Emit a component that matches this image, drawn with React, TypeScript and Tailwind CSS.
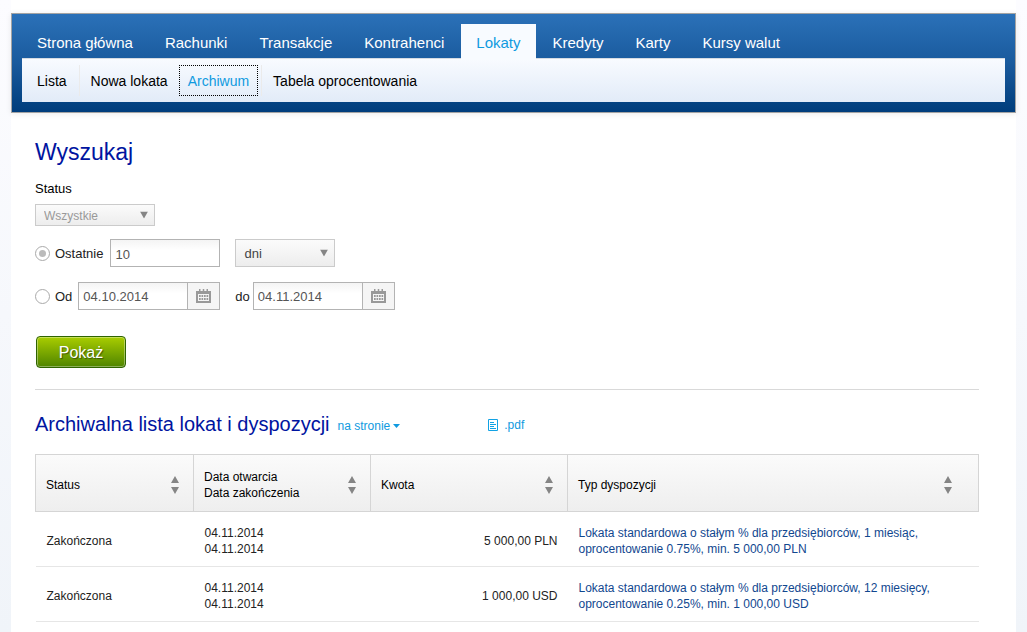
import { useState } from "react";
import type { ReactNode } from "react";
import clsx from "clsx";

const mainTabs = [
  "Strona główna",
  "Rachunki",
  "Transakcje",
  "Kontrahenci",
  "Lokaty",
  "Kredyty",
  "Karty",
  "Kursy walut",
];

const subTabs = [
  { label: "Lista", divider: true },
  { label: "Nowa lokata", divider: false },
  { label: "Archiwum", divider: true },
  { label: "Tabela oprocentowania", divider: false },
];

const deposits = [
  {
    status: "Zakończona",
    opened: "04.11.2014",
    closed: "04.11.2014",
    amount: "5 000,00 PLN",
    type: "Lokata standardowa o stałym % dla przedsiębiorców, 1 miesiąc, oprocentowanie 0.75%, min. 5 000,00 PLN",
  },
  {
    status: "Zakończona",
    opened: "04.11.2014",
    closed: "04.11.2014",
    amount: "1 000,00 USD",
    type: "Lokata standardowa o stałym % dla przedsiębiorców, 12 miesięcy, oprocentowanie 0.25%, min. 1 000,00 USD",
  },
];

const Header = () => {
  return (
    <header className="border border-[#a3a3a3] bg-linear-to-b from-[#2b71b8] via-[#195a9d] via-50% to-[#003d7c] px-2.5 pb-2.5 pt-2.5 shadow-[0_1px_6px_rgba(0,0,0,0.08)]">
      <nav aria-label="Menu główne">
        <ul className="flex gap-0.5">
          {mainTabs.map((tab) => (
            <li key={tab}>
              <a
                href="#"
                className={clsx(
                  "block px-[15px] text-[15px] leading-[37px] whitespace-nowrap",
                  tab === "Lokaty"
                    ? "relative -mb-px h-[35px] bg-[#f8fbff] text-[#0f9ae0]"
                    : "h-[34px] text-white",
                )}
              >
                {tab}
              </a>
            </li>
          ))}
        </ul>
      </nav>
      <nav
        aria-label="Lokaty"
        className="border-t border-[#d5dbe2] bg-linear-to-b from-[#f8fbff] to-[#e2ebf8] px-1.5 py-1.5"
      >
        <ul className="flex gap-0.5">
          {subTabs.map(({ label, divider }) => (
            <li
              key={label}
              className={clsx(divider && "border-r border-[#ebebeb] pr-[3px]")}
            >
              <a
                href="#"
                className={clsx(
                  "block border border-dotted px-2 pt-0.5 text-sm leading-[27px] whitespace-nowrap",
                  label === "Archiwum"
                    ? "border-black text-[#0f9ae0]"
                    : "border-transparent text-black",
                )}
              >
                {label}
              </a>
            </li>
          ))}
        </ul>
      </nav>
    </header>
  );
};

type SelectBoxProps = {
  id: string;
  label?: string;
  options: string[];
  disabled?: boolean;
  className: string;
};

const SelectBox = ({ id, label, options, disabled, className }: SelectBoxProps) => {
  return (
    <div className={clsx("relative", className)}>
      <select
        id={id}
        aria-label={label}
        disabled={disabled}
        className="block h-full w-full appearance-none border border-[#cbcbcb] bg-linear-to-b from-[#fbfbfb] to-[#ededed] pl-2 pr-6 pt-0.5 text-[#444] opacity-100 disabled:text-[#999]"
      >
        {options.map((option) => (
          <option key={option}>{option}</option>
        ))}
      </select>
      <svg
        viewBox="0 0 8 7"
        className="pointer-events-none absolute right-[7px] top-1/2 h-[7px] w-2 -translate-y-1/2"
      >
        <path d="M0 0h8L4 7z" fill="#858585" />
      </svg>
    </div>
  );
};

const CalendarIcon = () => {
  return (
    <svg viewBox="0 0 15 14" className="h-3.5 w-[15px]" fill="#999">
      <path d="M0 2h15v12H0zM2 5v7h11V5z" fillRule="evenodd" />
      <path d="M3 0h1.500v2H3zM6.750 0h1.500v2h-1.500zM10.500 0H12v2h-1.500z" />
      <path d="M3 6h1.700v2H3zM5.500 6h1.700v2H5.500zM8 6h1.700v2H8zM10.500 6h1.700v2h-1.700zM3 9h1.700v2H3zM5.500 9h1.700v2H5.500zM8 9h1.700v2H8zM10.500 9h1.700v2h-1.700z" />
    </svg>
  );
};

const DateInput = ({ id, value, label }: { id: string; value: string; label: string }) => {
  return (
    <div className="flex h-7 w-[142px] border border-[#b3b3b3]">
      <input
        id={id}
        aria-label={label}
        type="text"
        defaultValue={value}
        className="min-w-0 flex-1 bg-linear-to-b from-[#f4f4f4] to-white to-40% px-1 pt-0.5 text-[#555]"
      />
      <button
        type="button"
        aria-label="Wybierz datę"
        className="flex w-8 items-center justify-center border-l border-[#b3b3b3] bg-[#f5f5f5]"
      >
        <CalendarIcon />
      </button>
    </div>
  );
};

const radioStyle =
  "relative size-[15px] shrink-0 appearance-none rounded-full border border-[#aaa] bg-white before:absolute before:inset-[3px] before:rounded-full checked:before:bg-[#bbb]";

const SearchForm = () => {
  const [range, setRange] = useState("last");

  return (
    <form className="text-[13px] text-[#222]" onSubmit={(e) => e.preventDefault()}>
      <h1 className="text-[23px] leading-7 text-[#0014a0]">Wyszukaj</h1>
      <label htmlFor="status" className="mt-[13px] block leading-5 text-black">
        Status
      </label>
      <SelectBox
        id="status"
        options={["Wszystkie"]}
        disabled
        className="mt-[5px] h-[22px] w-[120px] text-xs"
      />
      <div className="mt-[13px] flex items-center">
        <input
          id="range-last"
          type="radio"
          name="range"
          checked={range === "last"}
          onChange={() => setRange("last")}
          className={radioStyle}
        />
        <label htmlFor="range-last" className="ml-[5px] mr-[7px] pt-0.5">
          Ostatnie
        </label>
        <input
          type="text"
          aria-label="Liczba"
          defaultValue="10"
          className="mr-[15px] h-7 w-[110px] border border-[#b3b3b3] bg-linear-to-b from-[#f4f4f4] to-white to-40% px-1 pt-0.5 text-[#555]"
        />
        <SelectBox
          id="unit"
          label="Jednostka"
          options={["dni", "miesięcy"]}
          className="h-7 w-[100px]"
        />
      </div>
      <div className="mt-[15px] flex items-center">
        <input
          id="range-dates"
          type="radio"
          name="range"
          checked={range === "dates"}
          onChange={() => setRange("dates")}
          className={radioStyle}
        />
        <label htmlFor="range-dates" className="ml-[5px] mr-1.5 pt-0.5">
          Od
        </label>
        <DateInput id="date-from" label="Data od" value="04.10.2014" />
        <label htmlFor="date-to" className="ml-[15px] mr-[3px] pt-0.5">
          do
        </label>
        <DateInput id="date-to" label="Data do" value="04.11.2014" />
      </div>
      <button
        type="submit"
        className="ml-px mt-[26px] block h-8 w-[90px] rounded-[4px] border border-[#2f6400] bg-linear-to-b from-[#a9cd00] to-[#4f8500] pt-0.5 text-base text-white shadow-[inset_0_0_0_1px_rgba(255,255,255,0.35)] text-shadow-[1px_1px_1px_rgba(0,0,0,0.45)]"
      >
        Pokaż
      </button>
    </form>
  );
};

const SortHeader = ({ children, className }: { children: ReactNode; className: string }) => {
  return (
    <th className={clsx("border border-[#d5d5d5] p-0 pt-[3px] font-normal", className)}>
      <button
        type="button"
        className="flex w-full items-center justify-between px-2.5 text-left"
      >
        <span>{children}</span>
        <svg viewBox="0 0 8 18" className="mr-1 h-[18px] w-2 shrink-0">
          <path d="M4 0l4 7H0zM0 11h8l-4 7z" fill="#858585" />
        </svg>
      </button>
    </th>
  );
};

const DepositTable = () => {
  return (
    <table className="mt-4 w-full table-fixed border-collapse text-xs leading-4 text-[#222]">
      <thead>
        <tr className="h-[57px] bg-linear-to-b from-[#fbfbfb] to-[#eeeeee] text-black">
          <SortHeader className="w-[158px]">Status</SortHeader>
          <SortHeader className="w-[177px]">
            Data otwarcia
            <br />
            Data zakończenia
          </SortHeader>
          <SortHeader className="w-[197px]">Kwota</SortHeader>
          <SortHeader className="[&_svg]:mr-4">Typ dyspozycji</SortHeader>
        </tr>
      </thead>
      <tbody>
        {deposits.map((deposit) => (
          <tr key={deposit.amount} className="h-[55px] border-b border-[#e6e6e6]">
            <td className="pl-[11px] pr-2.5 pt-[3px]">{deposit.status}</td>
            <td className="pl-[11px] pr-2.5 pt-[3px]">
              {deposit.opened}
              <br />
              {deposit.closed}
            </td>
            <td className="pl-[11px] pr-2.5 pt-[3px] text-right">{deposit.amount}</td>
            <td className="pl-[11px] pr-7 pt-[3px]">
              <a href="#" className="text-[#11478f]">
                {deposit.type}
              </a>
            </td>
          </tr>
        ))}
      </tbody>
    </table>
  );
};

const App = () => {
  return (
    <div className="min-h-screen bg-linear-to-b from-[#fcfcff] to-[#f0f4f9] px-[11px] font-['Liberation_Sans',Arial,sans-serif]">
      <div className="min-h-screen bg-white pb-2.5 pt-[13px]">
        <Header />
        <main className="pl-6 pr-[37px] pt-[25px]">
          <SearchForm />
          <section className="mt-[21px] border-t border-[#d9d9d9] pt-5">
            <div className="flex h-7 items-center text-xs text-[#0f9ae0]">
              <h2 className="text-xl leading-7 text-[#0014a0]">
                Archiwalna lista lokat i dyspozycji
              </h2>
              <button type="button" className="ml-2 mt-1 flex items-center gap-[3px]">
                na stronie
                <svg viewBox="0 0 7 4" className="h-1 w-[7px]">
                  <path d="M0 0h7L3.500 4z" fill="currentColor" />
                </svg>
              </button>
              <a href="#" className="ml-[88px] mt-px flex items-center gap-1.5">
                <svg viewBox="0 0 10 12" className="h-3 w-2.5" fill="none" stroke="#12a2e4">
                  <path d="M.5.5h9v11h-9zM2 3.500h4M2 5.500h6M2 7.500h4M2 9.500h6" />
                </svg>
                .pdf
              </a>
            </div>
            <DepositTable />
          </section>
        </main>
      </div>
    </div>
  );
};

export default App;
